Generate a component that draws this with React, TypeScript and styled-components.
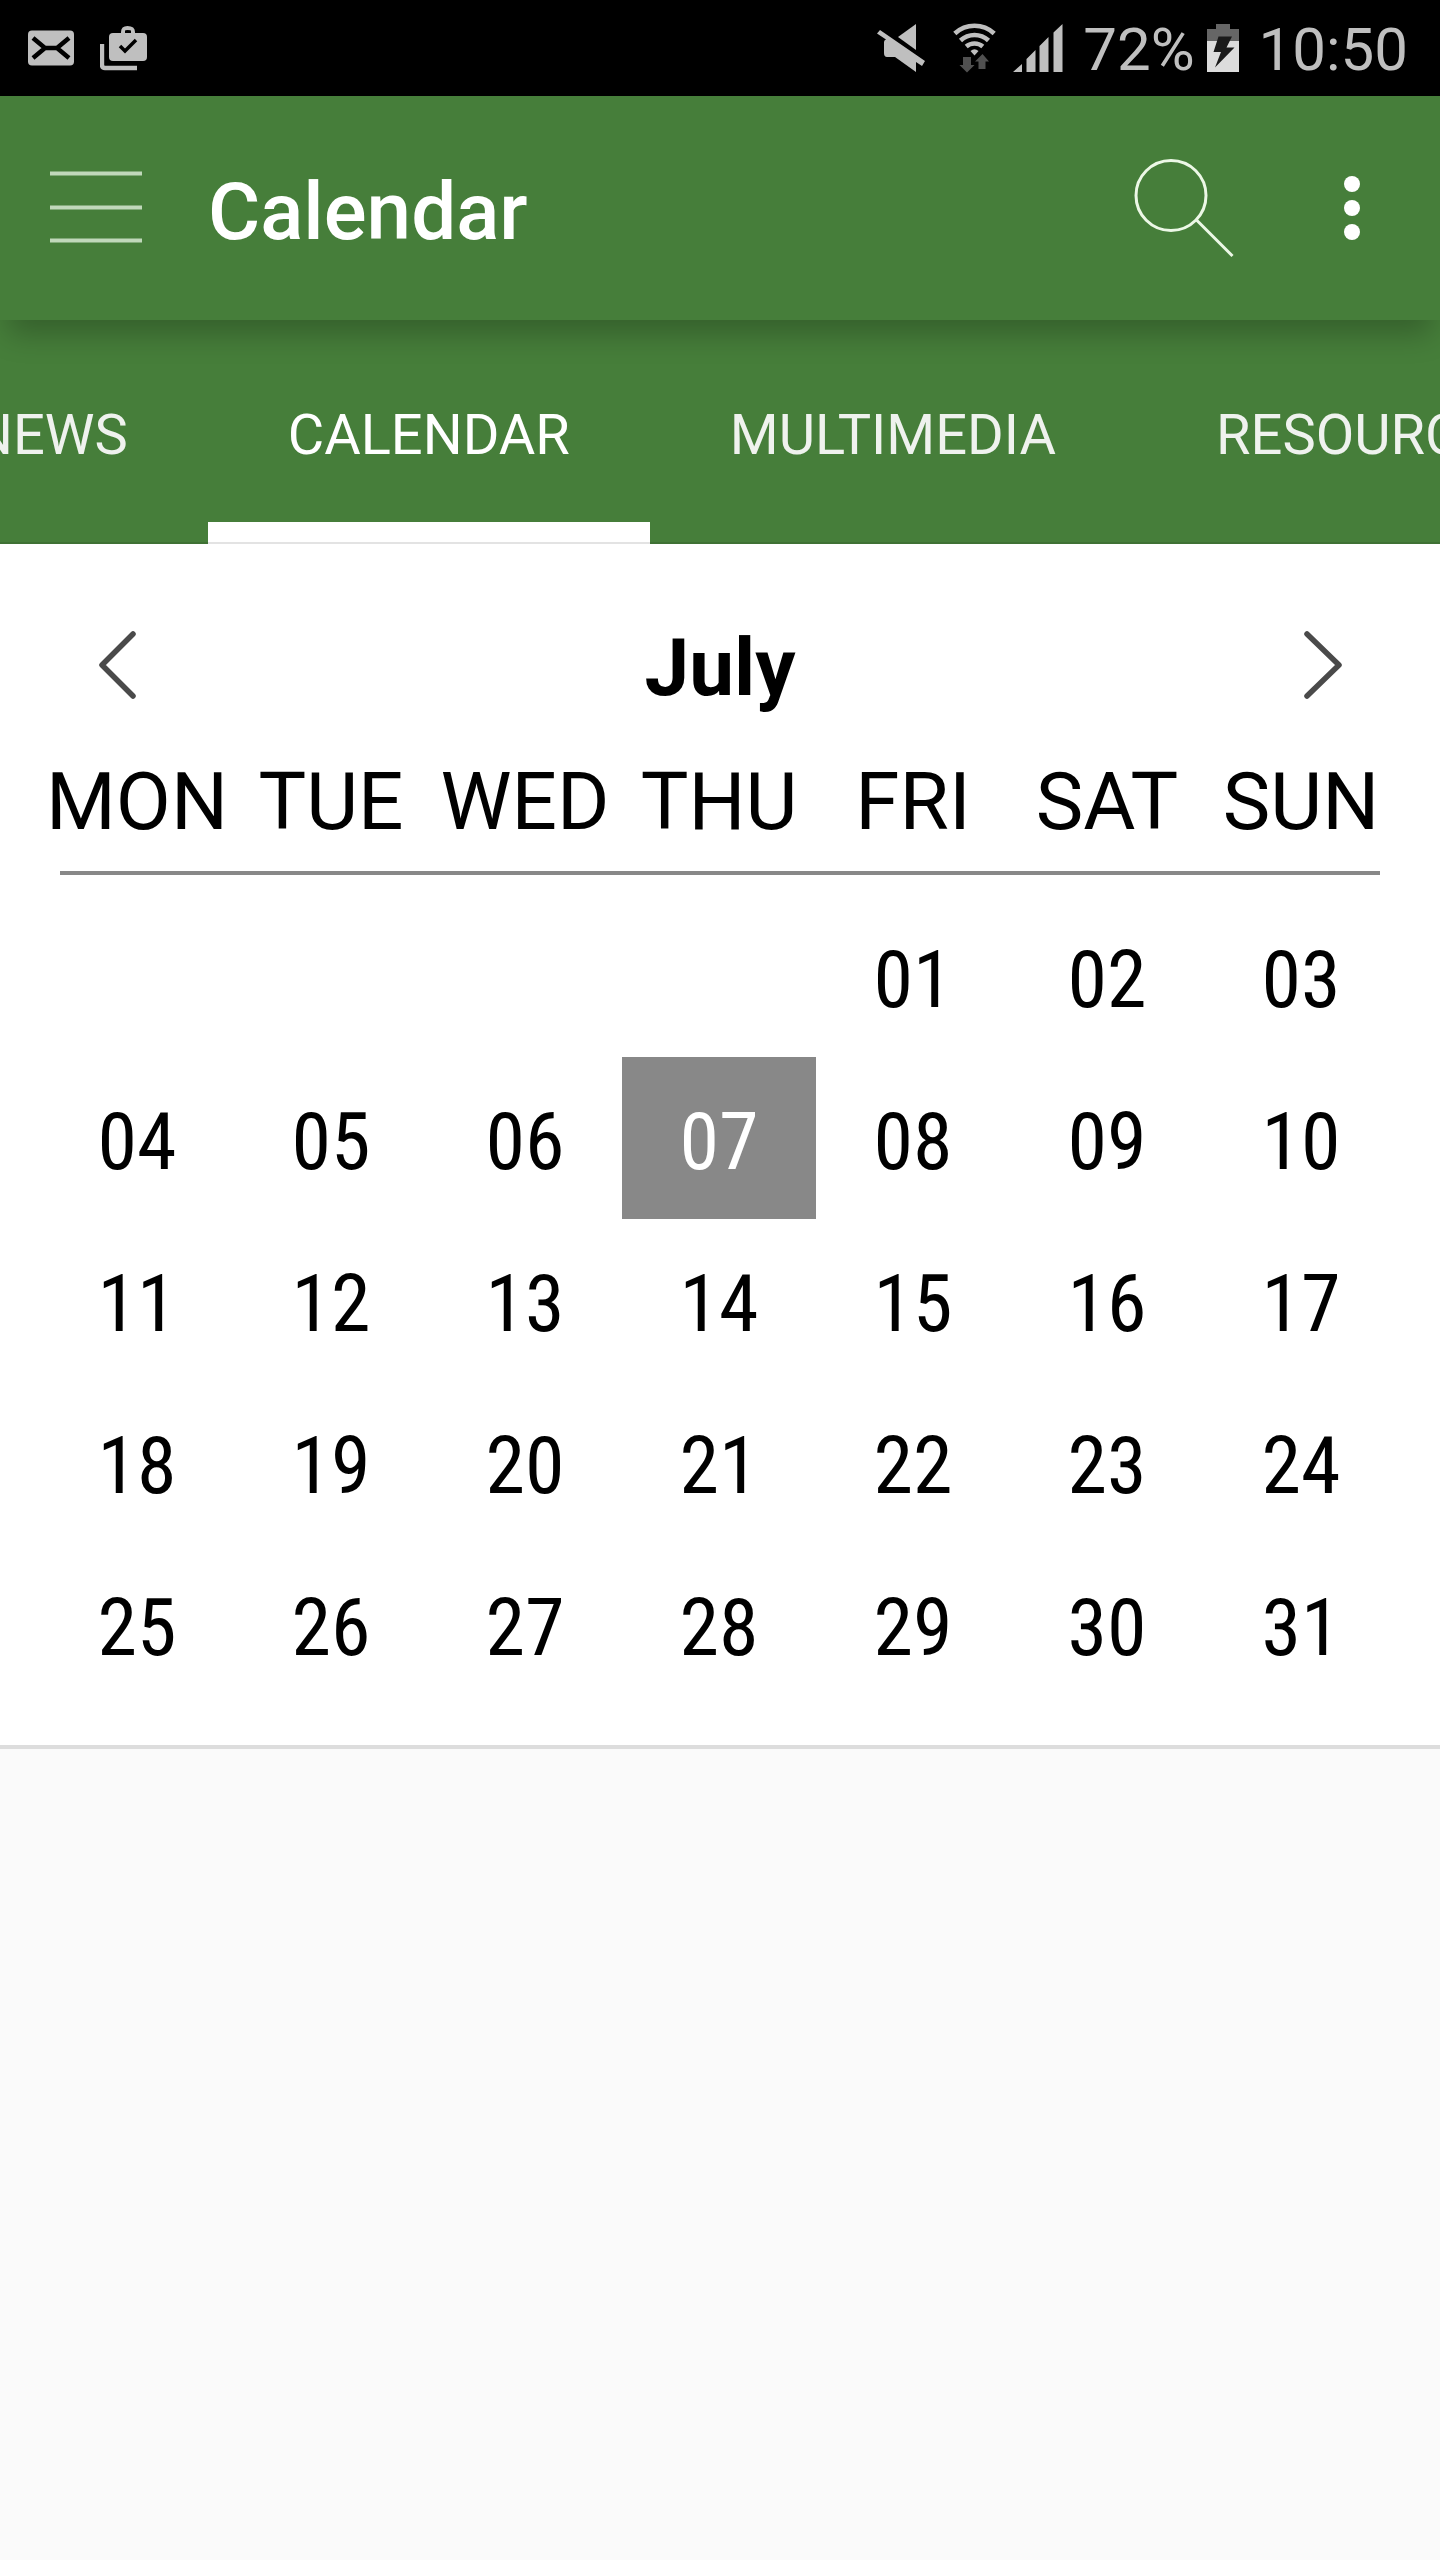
import React, { useLayoutEffect, useRef, useState } from "react";
import styled, { createGlobalStyle } from "styled-components";

const green = "#467e3a";
const grey = "#888888";
const statusGrey = "#bfbfbf";
const TAB_OFFSET = 208;

const GlobalStyle = createGlobalStyle`
  *, *::before, *::after { box-sizing: border-box; }
  body {
    margin: 0;
    background: #fafafa;
    font-family: Roboto, "Liberation Sans", sans-serif;
    color: #000;
  }
  button {
    margin: 0;
    padding: 0;
    border: 0;
    background: none;
    color: inherit;
    font: inherit;
    cursor: pointer;
  }
  svg { display: block; }
`;

const StatusBar = styled.div`
  display: flex;
  justify-content: space-between;
  align-items: center;
  height: 96px;
  padding: 0 32px 0 28px;
  background: #000;
  color: ${statusGrey};
`;

const Cluster = styled.div<{ $gap: number }>`
  display: flex;
  align-items: center;
  gap: ${(p) => p.$gap}px;
`;

const StatusText = styled.span`
  padding-top: 4px;
  font-size: 60px;
  line-height: 72px;
`;

const AppBar = styled.header`
  position: relative;
  z-index: 1;
  display: flex;
  align-items: center;
  height: 224px;
  padding: 0 48px;
  background: ${green};
  color: #fff;
  box-shadow: 0 22px 28px -8px rgba(0, 0, 0, 0.24);
`;

const Title = styled.h1`
  flex: 1;
  margin: 0;
  padding: 8px 0 0 64px;
  font-size: 80px;
  font-weight: 500;
  line-height: 96px;
`;

const BarActions = styled.div`
  display: flex;
  align-items: center;
  gap: 62px;
`;

const TabStrip = styled.nav`
  position: relative;
  display: flex;
  height: 224px;
  overflow-x: auto;
  scrollbar-width: none;
  background: ${green};
`;

const Tab = styled.button<{ $active: boolean }>`
  flex: none;
  padding: 6px 80px 0;
  font-size: 56px;
  line-height: 64px;
  text-transform: uppercase;
  color: ${(p) => (p.$active ? "#ffffff" : "#eff2ee")};
  box-shadow: ${(p) =>
    p.$active
      ? "inset 0 -2px 0 #e3e3e3, inset 0 -22px 0 #ffffff"
      : "inset 0 -2px 0 #3f7134"};
`;

const CalendarCard = styled.main`
  padding: 68px 42px 40px 40px;
  border-bottom: 4px solid #dddddd;
  background: #fff;
`;

const MonthBar = styled.div`
  display: flex;
  justify-content: space-between;
  align-items: center;
  padding: 0 38px 0 40px;
`;

const MonthName = styled.h2`
  margin: 0;
  padding-top: 8px;
  font-size: 80px;
  font-weight: 700;
  line-height: 96px;
`;

const MonthTable = styled.table`
  width: 100%;
  margin-top: 30px;
  border-collapse: collapse;
  table-layout: fixed;
  font-size: 80px;
`;

const WeekHead = styled.thead`
  background: linear-gradient(${grey}, ${grey}) no-repeat right 18px bottom 20px /
    calc(100% - 38px) 4px;
`;

const WeekDay = styled.th`
  padding: 8px 0 45px;
  font-weight: 400;
  line-height: 96px;
`;

const DayCell = styled.td`
  padding: 0;
`;

const Day = styled.button<{ $selected: boolean }>`
  display: block;
  width: 100%;
  height: 162px;
  padding-top: 8px;
  font-family: "Roboto Condensed", Roboto, sans-serif;
  line-height: 96px;
  background: ${(p) => (p.$selected ? grey : "transparent")};
  color: ${(p) => (p.$selected ? "#fff" : "#000")};
`;

const MailIcon = () => (
  <svg width="46" height="36" viewBox="0 0 46 36">
    <rect width="46" height="35" y="0.5" rx="4" fill={statusGrey} />
    <path
      d="M5 8 L17 18 L5 28 M41 8 L29 18 L41 28 M17 18 H29"
      fill="none"
      stroke="#000"
      strokeWidth="4.5"
    />
  </svg>
);

const BagIcon = () => (
  <svg width="47" height="46" viewBox="0 0 47 46">
    <path d="M2 19 V40 Q2 43 5 43 H37" fill="none" stroke={statusGrey} strokeWidth="4.4" />
    <rect x="9" y="8" width="38" height="28" rx="4" fill={statusGrey} />
    <path
      d="M23 9 V7 Q23 3 27.500 3 Q33 3 33 7 V9"
      fill="none"
      stroke={statusGrey}
      strokeWidth="4"
    />
    <rect x="25" y="5.500" width="6" height="2.500" fill="#000" />
    <path d="M20 21 L25 26 L36 15" fill="none" stroke="#000" strokeWidth="3.500" />
  </svg>
);

const MuteIcon = () => (
  <svg width="60" height="48" viewBox="0 0 60 48" fill={statusGrey}>
    <path d="M39 0 V26 L21 13 Z" />
    <path d="M3 6 L48 37 L45 42 L39 38 V48 L18 33 H10 Q7 33 7 29 V18 Q7 16 9 15.500 L0 9.500 Z" />
  </svg>
);

const WifiIcon = () => (
  <svg width="44" height="50" viewBox="0 0 44 50">
    <g fill="none" stroke={statusGrey} strokeWidth="4.600">
      <path d="M1.800 10.500 A29 29 0 0 1 41.200 10.500" />
      <path d="M7.500 17.500 A20.500 20.500 0 0 1 35.500 17.500" />
      <path d="M13.200 23.500 A13 13 0 0 1 29.800 23.500" />
    </g>
    <path d="M17.500 28 Q21.500 24.500 25.500 28 L21.500 32.500 Z" fill={statusGrey} />
    <path d="M10 34 H18 V42 H21.500 L14 49.500 L6.500 42 H10 Z" fill="#505050" />
    <path d="M25.500 46 V38.500 H22 L29.500 31 L36 38.500 H32.500 V46 Z" fill="#505050" />
  </svg>
);

const SignalIcon = () => (
  <svg width="50" height="48" viewBox="0 0 50 48" fill={statusGrey}>
    <path d="M0 48 L9 40 V48 Z M13.500 48 V35 L22.500 26 V48 Z M26.500 48 V22 L35.500 13 V48 Z M40.500 48 V8.500 L49.500 0 V48 Z" />
  </svg>
);

const BatteryIcon = () => (
  <svg width="32" height="48" viewBox="0 0 32 48">
    <path d="M9 0 H23 V5 H32 V17 H0 V5 H9 Z" fill="#666" />
    <rect y="17" width="32" height="31" fill="#dcdcdc" />
    <path d="M11.500 12.500 H25 L19.500 23.500 H27.500 L8 43.500 L14 28 H6.500 Z" fill="#1a1a1a" />
  </svg>
);

const MenuIcon = () => (
  <svg width="96" height="96" viewBox="0 0 96 96">
    <path
      d="M2 13.500 H94 M2 47.500 H94 M2 80.500 H94"
      stroke="#c0d8ba"
      strokeWidth="4"
    />
  </svg>
);

const SearchIcon = () => (
  <svg width="100" height="100" viewBox="0 0 100 100" fill="none" stroke="#ecf8e6" strokeWidth="3">
    <circle cx="37" cy="37.500" r="35" />
    <path d="M62.500 62 L98.500 98" />
  </svg>
);

const MoreIcon = () => (
  <svg width="96" height="96" viewBox="0 0 96 96" fill="#fff">
    <circle cx="56" cy="24" r="8" />
    <circle cx="56" cy="48" r="8" />
    <circle cx="56" cy="72" r="8" />
  </svg>
);

const Chevron = ({ next = false }: { next?: boolean }) => (
  <svg width="76" height="80" viewBox="0 0 76 80">
    <path
      d={next ? "M23 10 L55 41 L23 72" : "M53 10 L22 41 L53 72"}
      fill="none"
      stroke="#4a4a4a"
      strokeWidth="5.500"
      strokeLinecap="round"
      strokeLinejoin="round"
    />
  </svg>
);

const tabs = ["News", "Calendar", "Multimedia", "Resources"];
const weekDays = ["MON", "TUE", "WED", "THU", "FRI", "SAT", "SUN"];
const firstWeekday = 4;
const weeks = Array.from({ length: 5 }, (_, w) =>
  Array.from({ length: 7 }, (_, d) => w * 7 + d - firstWeekday + 1)
);

export default function App() {
  const [tab, setTab] = useState("Calendar");
  const [selected, setSelected] = useState(7);
  const strip = useRef<HTMLElement>(null);
  const activeTab = useRef<HTMLButtonElement>(null);

  // Keep the active tab a fixed distance from the left edge of the strip.
  useLayoutEffect(() => {
    if (strip.current && activeTab.current) {
      strip.current.scrollLeft = activeTab.current.offsetLeft - TAB_OFFSET;
    }
  }, [tab]);

  return (
    <>
      <GlobalStyle />
      <StatusBar>
        <Cluster $gap={26}>
          <MailIcon />
          <BagIcon />
        </Cluster>
        <Cluster $gap={20}>
          <Cluster $gap={16}>
            <MuteIcon />
            <WifiIcon />
            <SignalIcon />
          </Cluster>
          <Cluster $gap={12}>
            <StatusText>72%</StatusText>
            <BatteryIcon />
          </Cluster>
          <StatusText>10:50</StatusText>
        </Cluster>
      </StatusBar>

      <AppBar>
        <button aria-label="Menu">
          <MenuIcon />
        </button>
        <Title>Calendar</Title>
        <BarActions>
          <button aria-label="Search">
            <SearchIcon />
          </button>
          <button aria-label="More options">
            <MoreIcon />
          </button>
        </BarActions>
      </AppBar>

      <TabStrip ref={strip}>
        {tabs.map((name) => (
          <Tab
            key={name}
            ref={name === tab ? activeTab : undefined}
            $active={name === tab}
            onClick={() => setTab(name)}
          >
            {name}
          </Tab>
        ))}
      </TabStrip>

      <CalendarCard>
        <MonthBar>
          <button aria-label="Previous month">
            <Chevron />
          </button>
          <MonthName>July</MonthName>
          <button aria-label="Next month">
            <Chevron next />
          </button>
        </MonthBar>
        <MonthTable>
          <WeekHead>
            <tr>
              {weekDays.map((d) => (
                <WeekDay key={d} scope="col">
                  {d}
                </WeekDay>
              ))}
            </tr>
          </WeekHead>
          <tbody>
            {weeks.map((week) => (
              <tr key={week[6]}>
                {week.map((day) => (
                  <DayCell key={day}>
                    {day > 0 && (
                      <Day $selected={day === selected} onClick={() => setSelected(day)}>
                        {String(day).padStart(2, "0")}
                      </Day>
                    )}
                  </DayCell>
                ))}
              </tr>
            ))}
          </tbody>
        </MonthTable>
      </CalendarCard>
    </>
  );
}
